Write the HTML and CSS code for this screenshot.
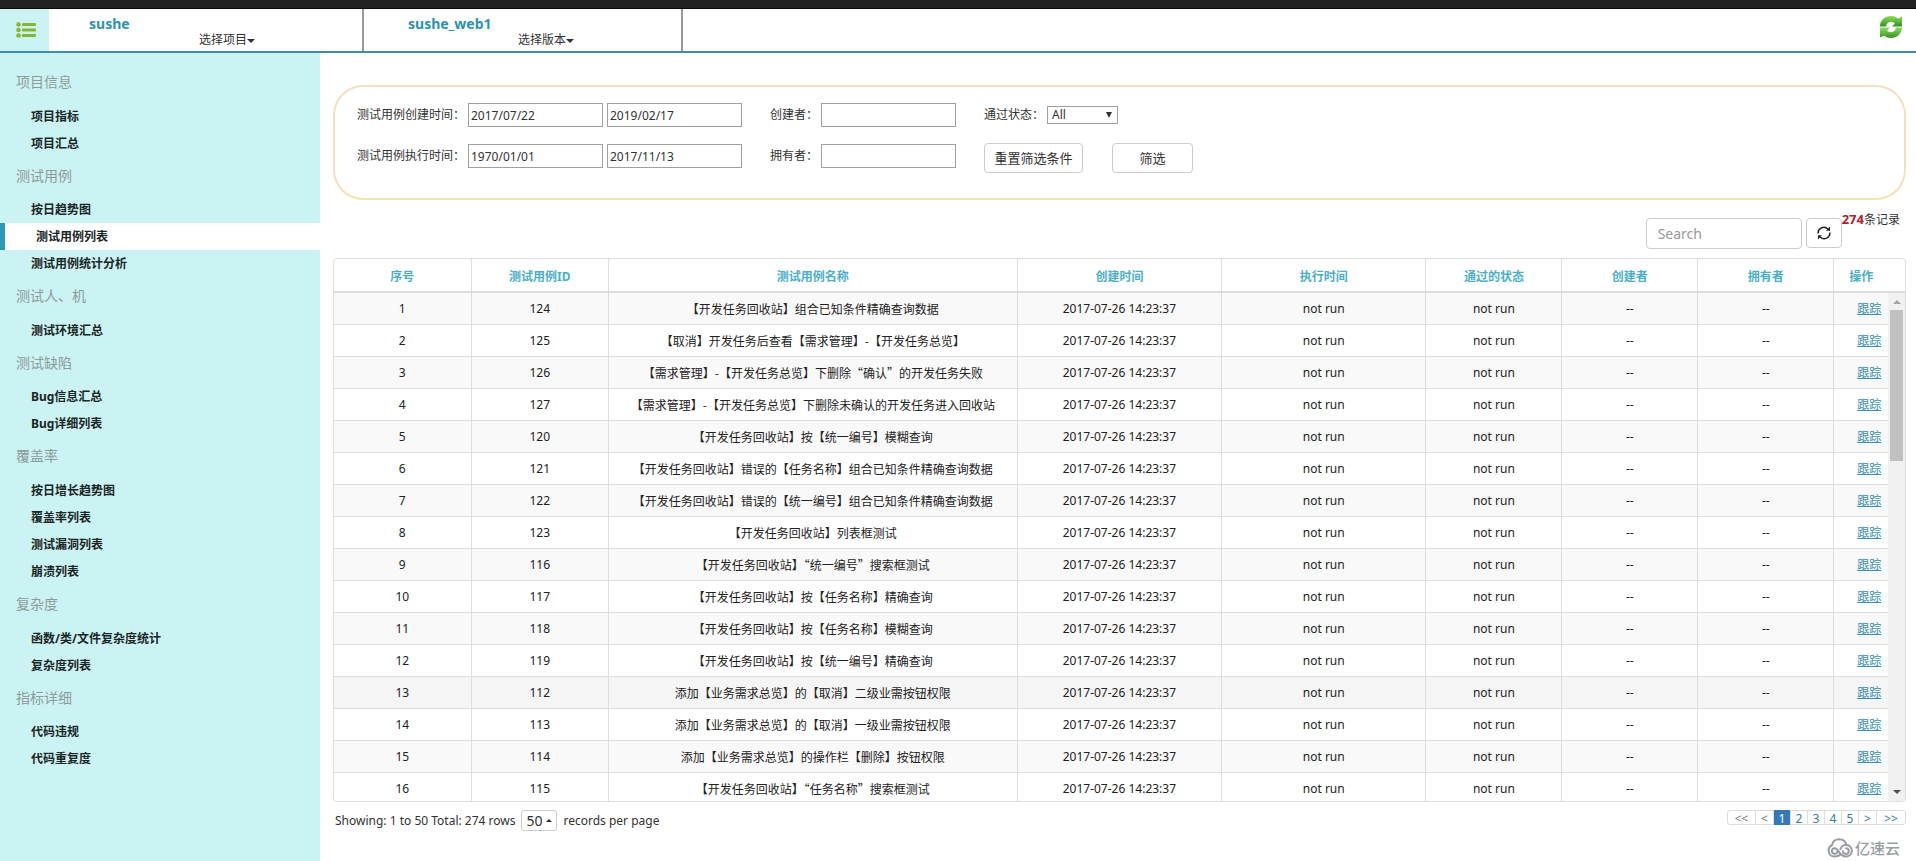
FILE: index.html
```html
<!DOCTYPE html>
<html lang="zh-CN">
<head>
<meta charset="utf-8">
<title>测试用例列表</title>
<link rel="stylesheet" href="styles.css">
</head>
<body>
<div class="topbar"></div>
<header class="header">
  <button class="menu-btn" type="button" aria-label="菜单">
    <svg width="21" height="16" viewBox="0 0 21 16" fill="#84b82c"><circle cx="2.5" cy="2.5" r="2.3"/><circle cx="2.5" cy="8" r="2.3"/><circle cx="2.5" cy="13.5" r="2.3"/><rect x="6" y="1" width="14" height="3" rx="1"/><rect x="6" y="6.5" width="14" height="3" rx="1"/><rect x="6" y="12" width="14" height="3" rx="1"/></svg>
  </button>
  <div class="picker picker-project">
    <strong class="picker-name">sushe</strong>
    <button class="picker-btn" type="button">选择项目<span class="caret"></span></button>
  </div>
  <div class="picker">
    <strong class="picker-name">sushe_web1</strong>
    <button class="picker-btn" type="button">选择版本<span class="caret"></span></button>
  </div>
  <button class="reload-btn" type="button" aria-label="刷新">
    <svg width="24" height="24" viewBox="0 0 24 24"><defs><linearGradient id="g" x1="0" y1="0" x2="0" y2="1"><stop offset="0" stop-color="#8fdc5c"/><stop offset="1" stop-color="#2f9420"/></linearGradient></defs><path fill="url(#g)" d="M1 11.400C1 5 6 1 12 1c3 0 5 .8 7 2.500L23 1.500v9.900h-10l3-3c-1-1-2.500-1.600-4-1.600-2.500 0-4.500 1.600-5 4.600z"/><path fill="url(#g)" d="M23 12.600C23 19 18 23 12 23c-3 0-5-.8-7-2.500L1 22.500v-9.900h10l-3 3c1 1 2.500 1.600 4 1.600 2.500 0 4.500-1.600 5-4.600z"/></svg>
  </button>
</header>
<div class="layout">
  <nav class="sidebar">
    <h2>项目信息</h2>
    <a href="#">项目指标</a><a href="#">项目汇总</a>
    <h2>测试用例</h2>
    <a href="#">按日趋势图</a><a href="#" class="active">测试用例列表</a><a href="#">测试用例统计分析</a>
    <h2>测试人、机</h2>
    <a href="#">测试环境汇总</a>
    <h2>测试缺陷</h2>
    <a href="#">Bug信息汇总</a><a href="#">Bug详细列表</a>
    <h2>覆盖率</h2>
    <a href="#">按日增长趋势图</a><a href="#">覆盖率列表</a><a href="#">测试漏洞列表</a><a href="#">崩溃列表</a>
    <h2>复杂度</h2>
    <a href="#">函数/类/文件复杂度统计</a><a href="#">复杂度列表</a>
    <h2>指标详细</h2>
    <a href="#">代码违规</a><a href="#">代码重复度</a>
  </nav>
  <main class="main">
    <form class="filters">
      <div class="field field-dates"><label for="c1">测试用例创建时间：</label><input id="c1" type="text" value="2017/07/22"><input type="text" aria-label="创建时间止" value="2019/02/17"></div>
      <div class="field"><label for="creator">创建者：</label><input id="creator" type="text"></div>
      <div class="field"><label for="state">通过状态：</label><span class="select-box"><select id="state"><option>All</option></select></span></div>
      <div class="field field-dates"><label for="e1">测试用例执行时间：</label><input id="e1" type="text" value="1970/01/01"><input type="text" aria-label="执行时间止" value="2017/11/13"></div>
      <div class="field"><label for="owner">拥有者：</label><input id="owner" type="text"></div>
      <div class="actions"><button class="btn" type="button">重置筛选条件</button><button class="btn btn-apply" type="button">筛选</button></div>
    </form>
    <div class="toolbar">
      <input class="search" type="text" placeholder="Search" aria-label="Search">
      <button class="btn btn-refresh" type="button" aria-label="刷新列表">
        <svg width="14" height="14" viewBox="0 0 14 14" fill="none" stroke="#222" stroke-width="1.500"><path d="M1.200 7.500A5.600 5.600 0 0 1 10.800 3M12.800 6.500A5.600 5.600 0 0 1 3.200 11"/><path fill="#222" stroke="none" d="M13 .5v4.300H9zM1 13.500V9.200h4z"/></svg>
      </button>
      <p class="count"><b>274</b>条记录</p>
    </div>
    <div class="grid">
      <div class="grid-head">
        <table>
          <colgroup><col class="c-no"><col class="c-no"><col class="c-name"><col class="c-time"><col class="c-time"><col class="c-user"><col class="c-user"><col class="c-user"><col class="c-op"></colgroup>
          <thead><tr><th>序号</th><th>测试用例ID</th><th>测试用例名称</th><th>创建时间</th><th>执行时间</th><th>通过的状态</th><th>创建者</th><th>拥有者</th><th>操作</th></tr></thead>
        </table>
      </div>
      <div class="grid-body">
        <div class="grid-rows">
        <table>
          <colgroup><col class="c-no"><col class="c-no"><col class="c-name"><col class="c-time"><col class="c-time"><col class="c-user"><col class="c-user"><col class="c-user"><col class="c-op"></colgroup>
          <tbody id="rows"></tbody>
        </table>
        </div>
        <div class="scrollbar"><span class="arrow arrow-up"></span><span class="thumb"></span><span class="arrow arrow-down"></span></div>
      </div>
    </div>
    <footer class="footer">
      <div class="paging-info">Showing: 1 to 50 Total: 274 rows <button class="size-btn" type="button">50<span class="caret caret-up"></span></button> records per page</div>
      <div class="footer-right">
        <nav class="pager" aria-label="分页"><a class="edge muted" href="#">&lt;&lt;</a><a class="step muted" href="#">&lt;</a><a class="current" href="#">1</a><a href="#">2</a><a href="#">3</a><a href="#">4</a><a href="#">5</a><a class="step" href="#">&gt;</a><a class="edge" href="#">&gt;&gt;</a></nav>
        <div class="brand"><svg width="26" height="20" viewBox="0 0 26 20" fill="none" stroke="#999ca4" stroke-width="2" stroke-linecap="round"><path d="M13.500 16.500C12 18 10 18.600 7.500 18.600A6 6 0 0 1 5 7.200C5.500 3.500 8.500 1.200 12.200 1.200c3.500 0 6.300 2 7 5.300"/><path d="M10.500 13.200a2.800 2.800 0 1 1-2.800-3c3.800 0 4.800 8.400 11.300 8.400a5.800 5.800 0 1 0-5.600-7.300"/><path d="M16 13.200a2.900 2.900 0 1 0 3-3"/></svg>亿速云</div>
      </div>
    </footer>
  </main>
</div>
<script src="rows.js"></script>
</body>
</html>
```
FILE: styles.css
```css
* { box-sizing: border-box; }
body { margin: 0; height: 100vh; display: flex; flex-direction: column; overflow: hidden; background: #fff; color: #333; font: 12px/18px "Noto Sans", "Noto Sans CJK SC", sans-serif; }
button, input, select { font: inherit; color: inherit; margin: 0; }
button { cursor: pointer; }
a { text-decoration: none; }

.topbar { height: 9px; flex: none; background: #222; border-bottom: 1px solid #080808; }
.header { height: 44px; flex: none; display: flex; border-bottom: 2px solid #3a8dab; }
.menu-btn { width: 49px; padding: 0 0 0 16px; border: 0; background: #cbf3f3; display: flex; align-items: center; }
.picker { width: 319px; padding: 6px 0 0 44px; border-right: 2px solid #999; }
.picker-project { width: 315px; padding-left: 40px; }
.picker-name { display: block; color: #2c93b3; font-size: 14px; line-height: 18px; }
.picker-btn { display: block; margin-left: 110px; padding: 0; border: 0; background: none; line-height: 13px; }
.caret { display: inline-block; border: 4px solid transparent; border-top-color: currentColor; border-bottom: 0; vertical-align: middle; }
.caret-up { border: 3px solid transparent; border-bottom-color: currentColor; border-top: 0; margin-left: 4px; }
.reload-btn { margin: 6px 13px 0 auto; padding: 0; border: 0; background: none; height: 24px; display: flex; }

.layout { flex: 1; min-height: 0; display: flex; }
.sidebar { width: 320px; flex: none; padding-top: 10px; background: #cbf3f3; }
.sidebar h2 { margin: 0; padding: 9px 16px 11px; color: #8c9c9c; font-size: 14px; line-height: 1.4; font-weight: 400; }
.sidebar a { display: block; height: 27px; padding-left: 31px; line-height: 27px; color: #1a2626; font-weight: 700; }
.sidebar .active { background: #fff; border-left: 5px solid #2c9ab7; }

.main { flex: 1; min-width: 0; display: flex; flex-direction: column; padding: 32px 10px 0 13px; }
.filters { display: grid; grid-template-columns: max-content max-content 1fr; gap: 11px 28px; height: 115px; flex: none; padding: 13px 22px; align-content: start; border: 2px solid #f5dfc0; border-bottom-color: #f0e5b0; border-radius: 30px; }
.field { display: flex; align-items: center; height: 30px; }
.field label { width: 63px; }
.field label[for="creator"], .field label[for="owner"] { width: 51px; }
.field-dates label { width: 111px; }
.field input { width: 135px; height: 24px; padding: 0 2px; border: 1px solid #a0a0a0; background: #fff; }
.field-dates input + input { margin-left: 4px; }
.select-box { position: relative; display: flex; }
.select-box::after { content: ""; position: absolute; right: 6px; top: 6px; border: 3px solid transparent; border-top: 6px solid #333; border-bottom: 0; pointer-events: none; }
select { appearance: none; width: 71px; height: 18px; padding: 0 4px; border: 1px solid #a0a0a0; background: #fff; line-height: 16px; }
.actions { display: flex; gap: 29px; padding-top: 2px; }
.btn { height: 30px; padding: 0 12px; border: 1px solid #ccc; border-radius: 4px; background: #fff; font-size: 13px; }
.actions .btn { width: 99px; padding: 0; }
.actions .btn-apply { width: 81px; }

.toolbar { display: flex; justify-content: flex-end; height: 58px; flex: none; padding: 18px 6px 0 0; }
.search { width: 156px; height: 31px; padding: 0 11px; border: 1px solid #ccc; border-radius: 4px; font-size: 14px; }
.search::placeholder { color: #999; }
.btn-refresh { width: 36px; margin-left: 4px; padding: 0; display: flex; align-items: center; justify-content: center; }
.count { margin: -8px 0 0; }
.count b { color: #b02028; font-size: 13px; }

.grid { flex: 1; min-height: 0; display: flex; flex-direction: column; overflow: hidden; border: 1px solid #ddd; border-radius: 4px; }
.grid-head { flex: none; padding-right: 17px; border-bottom: 2px solid #ddd; }
.grid-body { flex: 1; min-height: 0; display: flex; }
.grid-rows { flex: 1; min-width: 0; overflow: hidden; }
table { width: 100%; table-layout: fixed; border-collapse: separate; border-spacing: 0; text-align: center; }
.c-no { width: 8.85%; }
.c-name { width: 26.3%; }
.c-time { width: 13.15%; }
.c-user { width: 8.75%; }
th { height: 32px; padding: 3px 0 0; border-right: 1px solid #ddd; color: #4bafcb; }
td { height: 32px; padding: 0; border-right: 1px solid #ddd; border-bottom: 1px solid #ddd; color: #222; white-space: nowrap; overflow: hidden; }
th:last-child, td:last-child { border-right: 0; }
td:last-child { padding-left: 16px; }
.case-name { font-family: "Noto Sans CJK SC", sans-serif; }
td a { color: #3b8fb5; text-decoration: underline; }
tr:nth-child(odd) td { background: #f9f9f9; }
tr:nth-child(13) td { background: #f5f5f5; }
.scrollbar { width: 17px; flex: none; display: flex; flex-direction: column; align-items: center; padding: 7px 0; background: #f1f1f1; }
.thumb { width: 13px; height: 151px; margin-top: 6px; background: #c1c1c1; }
.arrow { border: 4px solid transparent; }
.arrow-up { border-top: 0; border-bottom-color: #a3a3a3; }
.arrow-down { border-bottom: 0; border-top-color: #505050; margin-top: auto; }

.footer { height: 59px; flex: none; display: flex; justify-content: space-between; padding-top: 8px; }
.paging-info { height: 21px; display: flex; align-items: center; gap: 6px; padding-left: 2px; }
.size-btn { height: 21px; padding: 0 4px; border: 1px solid #ccc; border-radius: 3px; background: #fff; font-size: 14px; line-height: 18px; display: flex; align-items: center; }
.footer-right { display: flex; flex-direction: column; align-items: flex-end; gap: 11px; }
.pager { display: flex; height: 15px; border: 1px solid #ddd; border-radius: 3px; }
.pager a { width: 17px; border-right: 1px solid #ddd; color: #337ab7; text-align: center; line-height: 15px; }
.pager .edge { width: 28px; }
.pager .step { width: 18px; }
.pager .muted { color: #777; }
.pager .current { background: #337ab7; color: #fff; margin: -1px 0; line-height: 17px; }
.pager a:last-child { border-right: 0; }
.brand { display: flex; align-items: center; gap: 2px; padding-right: 6px; color: #999ca4; font-size: 15px; line-height: 24px; font-weight: 500; }
```
FILE: rows.js
```js
const cases = [
  [124, "【开发任务回收站】组合已知条件精确查询数据"],
  [125, "【取消】开发任务后查看【需求管理】-【开发任务总览】"],
  [126, "【需求管理】-【开发任务总览】下删除“确认”的开发任务失败"],
  [127, "【需求管理】-【开发任务总览】下删除未确认的开发任务进入回收站"],
  [120, "【开发任务回收站】按【统一编号】模糊查询"],
  [121, "【开发任务回收站】错误的【任务名称】组合已知条件精确查询数据"],
  [122, "【开发任务回收站】错误的【统一编号】组合已知条件精确查询数据"],
  [123, "【开发任务回收站】列表框测试"],
  [116, "【开发任务回收站】“统一编号”搜索框测试"],
  [117, "【开发任务回收站】按【任务名称】精确查询"],
  [118, "【开发任务回收站】按【任务名称】模糊查询"],
  [119, "【开发任务回收站】按【统一编号】精确查询"],
  [112, "添加【业务需求总览】的【取消】二级业需按钮权限"],
  [113, "添加【业务需求总览】的【取消】一级业需按钮权限"],
  [114, "添加【业务需求总览】的操作栏【删除】按钮权限"],
  [115, "【开发任务回收站】“任务名称”搜索框测试"]
];
document.getElementById("rows").innerHTML = cases.map(([id, name], i) =>
  `<tr><td>${i + 1}</td><td>${id}</td><td class="case-name">${name}</td><td>2017-07-26 14:23:37</td><td>not run</td><td>not run</td><td>--</td><td>--</td><td><a href="#">跟踪</a></td></tr>`
).join("");
```
